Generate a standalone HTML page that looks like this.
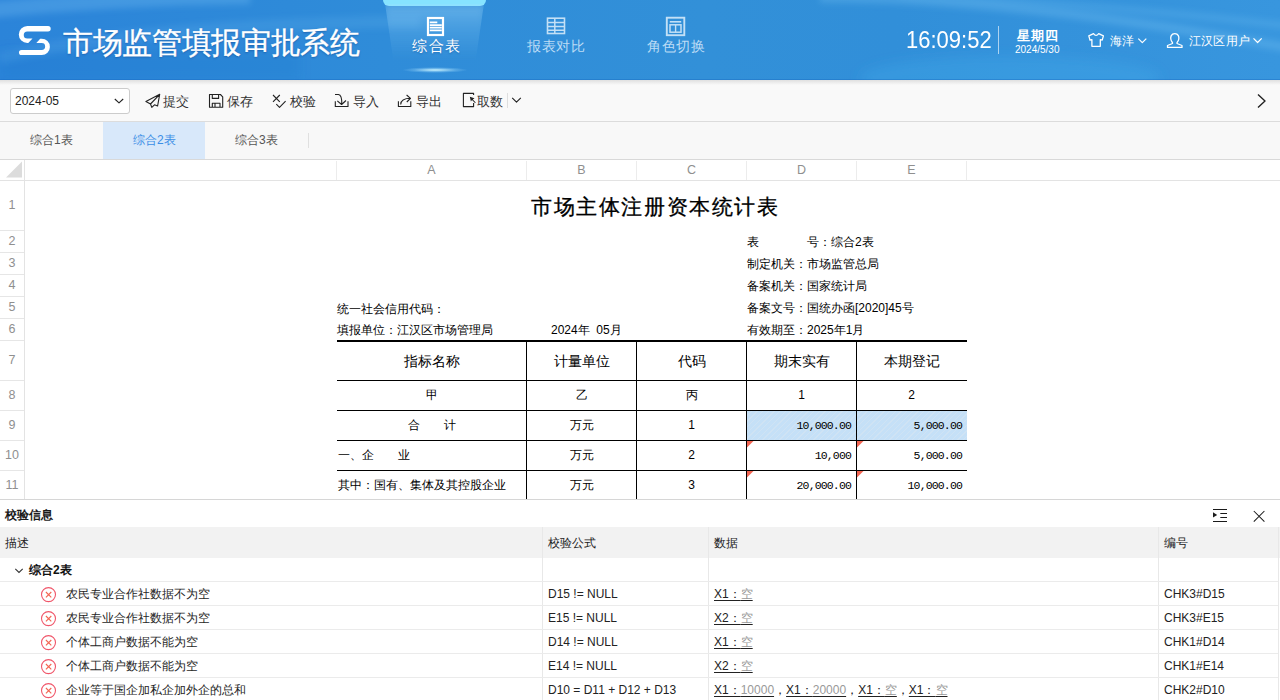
<!DOCTYPE html>
<html><head><meta charset="utf-8">
<style>
*{box-sizing:border-box;margin:0;padding:0}
html,body{width:1280px;height:700px;overflow:hidden;background:#fff;font-family:"Liberation Sans",sans-serif;color:#333}
.abs{position:absolute}
#hdr{position:absolute;left:0;top:0;width:1280px;height:80px;overflow:hidden;
 background:linear-gradient(90deg,#2b84d9 0%,#2f8cd9 30%,#3290d8 55%,#318fd9 70%,#3896de 100%)}
#bar{position:absolute;left:0;top:80px;width:1280px;height:42px;background:#f9f9f9;border-bottom:1px solid #dcdcdc}
#tabs{position:absolute;left:0;top:122px;width:1280px;height:38px;background:#f8f8f8;border-bottom:1px solid #d9d9d9}
#sheet{position:absolute;left:0;top:160px;width:1280px;height:340px;background:#fff;overflow:hidden}
#panel{position:absolute;left:0;top:499px;width:1280px;height:201px;background:#fff;border-top:1px solid #d6d6d6;overflow:hidden}
.t{position:absolute;white-space:nowrap}
.g{color:#999}
u{text-decoration:underline;text-underline-offset:2px}
</style></head><body>
<div id="hdr">
 <svg class="abs" style="left:0;top:0" width="1280" height="80" viewBox="0 0 1280 80">
  <defs><filter id="bl" x="-10%" y="-50%" width="120%" height="200%"><feGaussianBlur stdDeviation="3"/></filter>
  <filter id="bl2" x="-10%" y="-50%" width="120%" height="200%"><feGaussianBlur stdDeviation="6"/></filter></defs>
  <g filter="url(#bl)" fill="none">
   <path d="M-10 10 Q 110 -2 250 -4" stroke="rgba(150,215,255,.22)" stroke-width="16"/>
   <path d="M0 58 Q 160 22 420 22" stroke="rgba(150,215,255,.12)" stroke-width="12"/>
   <path d="M820 -2 Q 1020 -2 1290 48" stroke="rgba(150,220,255,.22)" stroke-width="9"/>
   <path d="M900 -6 Q 1120 6 1290 26" stroke="rgba(150,220,255,.16)" stroke-width="7"/>
  </g>
  <ellipse cx="1010" cy="78" rx="150" ry="22" fill="rgba(70,180,240,.25)" filter="url(#bl2)"/>
  <rect x="0" y="50" width="300" height="30" fill="rgba(20,90,190,.10)" filter="url(#bl2)"/>
 </svg>
 <svg class="abs" style="left:0;top:0" width="60" height="60" viewBox="0 0 60 60">
  <path d="M48 26.1 L27.3 26.1 A8.5 8.5 0 0 0 27.3 43.1 L28.3 43.1 L32.5 38.6 L27.3 38.6 A3.55 3.55 0 0 1 27.3 31.5 L48 31.5 A2.7 2.7 0 0 0 48 26.1 Z" fill="#fff"/>
  <path d="M40.2 38.7 L41.7 38.7 A8.2 8.2 0 0 1 41.7 55.1 L21.5 55.1 A2.55 2.55 0 0 1 21.5 50 L41.7 50 A3.45 3.45 0 0 0 41.7 43.1 L36.3 43.1 Z" fill="#fff"/>
 </svg>
 <div class="t" style="left:63px;top:25px;letter-spacing:-0.35px;font-size:30px;line-height:36px;color:#fff;-webkit-text-stroke:0.35px #fff;text-shadow:0 1px 2px rgba(0,40,110,.4)">市场监管填报审批系统</div>
 <div class="abs" style="left:383px;top:0;width:103px;height:6px;background:#86e3ff;border-radius:0 0 6px 6px"></div>
 <div class="abs" style="left:383px;top:4px;width:103px;height:56px;background:linear-gradient(180deg,rgba(170,225,255,.42),rgba(170,225,255,.18) 45%,rgba(170,225,255,0) 100%);clip-path:polygon(2% 0,98% 0,90% 100%,10% 100%);filter:blur(4px)"></div>
 <div class="abs" style="left:402px;top:67px;width:66px;height:6px;border-radius:50%;background:radial-gradient(ellipse at center,rgba(210,248,255,.95),rgba(170,225,255,.3) 45%,rgba(170,225,255,0) 70%)"></div>
 <svg class="abs" style="left:0;top:0" width="720" height="60" viewBox="0 0 720 60">
  <rect x="428" y="18" width="15" height="17" fill="none" stroke="#fff" stroke-width="2.2"/>
  <path d="M429.8 22.4H437.3M429.8 25.1H441.8M429.8 27.7H441.8M429.8 30.3H441.8" stroke="#fff" stroke-width="1.7"/>
  <g stroke="#c3e0f6" fill="none">
   <rect x="547.5" y="18.2" width="17" height="15.3" stroke-width="1.6"/>
   <path d="M547.5 22.5H564.5M547.5 26.5H564.5M547.5 30.3H564.5M554.8 18.2V33.5" stroke-width="1.5"/>
   <rect x="666.8" y="17.7" width="17.5" height="17.5" stroke-width="1.9"/>
   <path d="M669.8 21.8H681.2" stroke-width="1.6"/>
   <rect x="670" y="24.8" width="11" height="7.4" stroke-width="1.5"/>
   <path d="M675.6 24.8V32.2" stroke-width="1.4"/>
  </g>
 </svg>
 <div class="t" style="left:412px;top:37px;font-size:15px;line-height:18px;color:#fff;letter-spacing:1.6px;text-shadow:0 1px 2px rgba(0,50,120,.35)">综合表</div>
 <div class="t" style="left:527px;top:37px;font-size:14px;line-height:18px;color:#bcdcf5;letter-spacing:0.6px">报表对比</div>
 <div class="t" style="left:647px;top:37px;font-size:14px;line-height:18px;color:#bcdcf5;letter-spacing:0.6px">角色切换</div>
 <div class="t" style="left:906px;top:26.5px;font-size:22px;line-height:26px;color:#fff;transform:scaleY(1.06);transform-origin:0 0">16:09:52</div>
 <div class="abs" style="left:998px;top:26px;width:1px;height:28px;background:rgba(255,255,255,.6)"></div>
 <div class="t" style="left:1017px;top:28px;font-size:13px;line-height:16px;color:#fff;font-weight:bold;letter-spacing:1px">星期四</div>
 <div class="t" style="left:1015px;top:43.5px;font-size:10px;line-height:12px;color:#fff">2024/5/30</div>
 <svg class="abs" style="left:0;top:0" width="1280" height="60" viewBox="0 0 1280 60">
  <g fill="none" stroke="#fff" stroke-width="1.3" stroke-linejoin="round">
   <path d="M1093.5 33.6 Q1096 37.2 1098.7 33.6 L1103.4 35.8 L1102.2 40.2 L1100.3 39.6 V46.3 H1091.9 V39.6 L1090 40.2 L1088.8 35.8 Z"/>
   <path d="M1138.3 38.6L1142.3 42.6L1146.3 38.6" stroke-width="1.2"/>
   <path d="M1174.8 33.7 C1171 33.7 1170.5 37 1170.8 39 C1171.1 41 1172 42 1172.5 42.6 L1172.5 43.5 L1167.5 45.5 V47.4 H1182 V45.5 L1177 43.5 L1177 42.6 C1177.5 42 1178.5 41 1178.8 39 C1179.1 37 1178.6 33.7 1174.8 33.7 Z"/>
   <path d="M1253.5 38.4L1257.6 42.5L1261.7 38.4" stroke-width="1.2"/>
  </g>
 </svg>
 <div class="t" style="left:1110px;top:33px;font-size:12px;line-height:16px;color:#fff;letter-spacing:0.3px">海洋</div>
 <div class="t" style="left:1189px;top:33px;font-size:12px;line-height:16px;color:#fff;letter-spacing:0.2px">江汉区用户</div>
</div>
<div class="abs" style="left:0;top:79px;width:1280px;height:1px;background:rgba(20,100,190,.35)"></div>
<div id="bar">
 <div class="abs" style="left:0;top:0;width:1280px;height:5px;background:linear-gradient(180deg,rgba(0,0,0,.10),rgba(0,0,0,0))"></div>
 <div class="abs" style="left:10px;top:8px;width:120px;height:26px;background:#fff;border:1px solid #cccccc;border-radius:3px"></div>
 <div class="t" style="left:15px;top:14px;font-size:12px;line-height:14px;color:#222">2024-05</div>
 <svg class="abs" style="left:0;top:0" width="1280" height="42" viewBox="0 80 1280 42">
  <g fill="none" stroke="#222" stroke-width="1.1" stroke-linejoin="round">
   <path d="M114.8 99 L119 102.9 L123.2 99"/>
   <path d="M159.7 94.3 L145.9 101.5 L150.5 104 L151.8 107.4 L154.5 104.8 L157.6 106 Z M159.7 94.3 L150.5 104"/>
   <path d="M209.5 94.5 H220.4 L222.7 96.8 V107.3 H209.5 Z M212.3 94.5 V98.4 H218.6 V94.5 M212.3 107.3 V103.2 H220 V107.3 M215 103.2 V107.3"/>
   <path d="M273 95 L279.8 101.8 M279.8 95 L273 101.8 M276.3 104.2 L279.5 107.3 L285.6 101.2"/>
   <path d="M335.3 101.3 V106.5 H348 V101.3 M335 94.5 H338.5 Q342 95 341.8 104 M337.3 100.8 L341.6 104.5 L346 100.5"/>
   <path d="M398.4 101.3 V106.5 H410.8 V101.3 M400.7 104.5 Q401 98.3 410.5 98.3 M406.6 95 L410.5 98.3 L406.8 102"/>
   <path d="M473.6 95 V93.4 H463.4 V106.6 H473.6 V103"/>
   <path d="M512.2 97.8 L516.5 102.2 L520.8 97.8"/>
   <path d="M1258 94.5 L1265 101 L1258 107.5" stroke-width="1.4"/>
  </g>
  <path d="M469.8 96.8 L474.5 98.3 L472.8 99.4 L475.8 102.4 L475 103 L472 100 L470.9 101.6 Z" fill="#222"/>
  <rect x="507" y="93" width="1" height="15" fill="#dedede"/>
 </svg>
 <div class="t" style="left:163px;top:14px;font-size:12.5px;line-height:16px;color:#333">提交</div>
 <div class="t" style="left:227px;top:14px;font-size:12.5px;line-height:16px;color:#333">保存</div>
 <div class="t" style="left:290px;top:14px;font-size:12.5px;line-height:16px;color:#333">校验</div>
 <div class="t" style="left:353px;top:14px;font-size:12.5px;line-height:16px;color:#333">导入</div>
 <div class="t" style="left:416px;top:14px;font-size:12.5px;line-height:16px;color:#333">导出</div>
 <div class="t" style="left:477px;top:14px;font-size:12.5px;line-height:16px;color:#333">取数</div>
</div>
<div id="tabs">
 <div class="abs" style="left:103px;top:0;width:102px;height:37px;background:#d8e8fa"></div>
 <div class="t" style="left:30px;top:11px;font-size:12px;line-height:14px;color:#555">综合1表</div>
 <div class="t" style="left:133px;top:11px;font-size:12px;line-height:14px;color:#3b8ee6">综合2表</div>
 <div class="t" style="left:235px;top:11px;font-size:12px;line-height:14px;color:#555">综合3表</div>
 <div class="abs" style="left:308px;top:11px;width:1px;height:15px;background:#e0e0e0"></div>
</div>
<div id="sheet">
<div class="abs" style="left:0;top:20px;width:1280px;height:1px;background:#e3e3e3"></div>
<div class="abs" style="left:24px;top:0;width:1px;height:340px;background:#e3e3e3"></div>
<svg class="abs" style="left:0;top:0" width="26" height="20"><path d="M22 1.5 V17.5 H6 Z" fill="#dcdcdc"/></svg>
<div class="abs" style="left:336px;top:1px;width:1px;height:19px;background:#ececec"></div>
<div class="abs" style="left:526px;top:1px;width:1px;height:19px;background:#ececec"></div>
<div class="abs" style="left:636px;top:1px;width:1px;height:19px;background:#ececec"></div>
<div class="abs" style="left:746px;top:1px;width:1px;height:19px;background:#ececec"></div>
<div class="abs" style="left:856px;top:1px;width:1px;height:19px;background:#ececec"></div>
<div class="abs" style="left:966px;top:1px;width:1px;height:19px;background:#ececec"></div>
<div class="t" style="left:337px;top:3px;width:189px;text-align:center;font-size:12.5px;line-height:14px;color:#8f8f8f">A</div>
<div class="t" style="left:527px;top:3px;width:109px;text-align:center;font-size:12.5px;line-height:14px;color:#8f8f8f">B</div>
<div class="t" style="left:637px;top:3px;width:109px;text-align:center;font-size:12.5px;line-height:14px;color:#8f8f8f">C</div>
<div class="t" style="left:747px;top:3px;width:109px;text-align:center;font-size:12.5px;line-height:14px;color:#8f8f8f">D</div>
<div class="t" style="left:857px;top:3px;width:109px;text-align:center;font-size:12.5px;line-height:14px;color:#8f8f8f">E</div>
<div class="abs" style="left:0;top:70px;width:24px;height:1px;background:#e6e6e6"></div>
<div class="t" style="left:0;top:38.0px;width:24px;text-align:center;font-size:12.5px;line-height:14px;color:#8f8f8f">1</div>
<div class="abs" style="left:0;top:92px;width:24px;height:1px;background:#e6e6e6"></div>
<div class="t" style="left:0;top:74.0px;width:24px;text-align:center;font-size:12.5px;line-height:14px;color:#8f8f8f">2</div>
<div class="abs" style="left:0;top:114px;width:24px;height:1px;background:#e6e6e6"></div>
<div class="t" style="left:0;top:96.0px;width:24px;text-align:center;font-size:12.5px;line-height:14px;color:#8f8f8f">3</div>
<div class="abs" style="left:0;top:136px;width:24px;height:1px;background:#e6e6e6"></div>
<div class="t" style="left:0;top:118.0px;width:24px;text-align:center;font-size:12.5px;line-height:14px;color:#8f8f8f">4</div>
<div class="abs" style="left:0;top:158px;width:24px;height:1px;background:#e6e6e6"></div>
<div class="t" style="left:0;top:140.0px;width:24px;text-align:center;font-size:12.5px;line-height:14px;color:#8f8f8f">5</div>
<div class="abs" style="left:0;top:180px;width:24px;height:1px;background:#e6e6e6"></div>
<div class="t" style="left:0;top:162.0px;width:24px;text-align:center;font-size:12.5px;line-height:14px;color:#8f8f8f">6</div>
<div class="abs" style="left:0;top:220px;width:24px;height:1px;background:#e6e6e6"></div>
<div class="t" style="left:0;top:193.0px;width:24px;text-align:center;font-size:12.5px;line-height:14px;color:#8f8f8f">7</div>
<div class="abs" style="left:0;top:250px;width:24px;height:1px;background:#e6e6e6"></div>
<div class="t" style="left:0;top:228.0px;width:24px;text-align:center;font-size:12.5px;line-height:14px;color:#8f8f8f">8</div>
<div class="abs" style="left:0;top:280px;width:24px;height:1px;background:#e6e6e6"></div>
<div class="t" style="left:0;top:258.0px;width:24px;text-align:center;font-size:12.5px;line-height:14px;color:#8f8f8f">9</div>
<div class="abs" style="left:0;top:310px;width:24px;height:1px;background:#e6e6e6"></div>
<div class="t" style="left:0;top:288.0px;width:24px;text-align:center;font-size:12.5px;line-height:14px;color:#8f8f8f">10</div>
<div class="abs" style="left:0;top:340px;width:24px;height:1px;background:#e6e6e6"></div>
<div class="t" style="left:0;top:318.0px;width:24px;text-align:center;font-size:12.5px;line-height:14px;color:#8f8f8f">11</div>
<div class="t" style="left:531px;top:34px;letter-spacing:1.6px;font-family:'Liberation Serif',serif;font-size:21px;line-height:26px;-webkit-text-stroke:0.3px #000;color:#000">市场主体注册资本统计表</div>
<div class="t" style="left:747px;top:75px;font-size:12px;line-height:14px;color:#000">表</div>
<div class="t" style="left:807px;top:75px;font-size:12px;line-height:14px;color:#000">号：综合2表</div>
<div class="t" style="left:747px;top:97px;font-size:12px;line-height:14px;color:#000">制定机关：市场监管总局</div>
<div class="t" style="left:747px;top:119px;font-size:12px;line-height:14px;color:#000">备案机关：国家统计局</div>
<div class="t" style="left:747px;top:141px;font-size:12px;line-height:14px;color:#000">备案文号：国统办函[2020]45号</div>
<div class="t" style="left:337px;top:142px;font-size:12px;line-height:14px;color:#000">统一社会信用代码：</div>
<div class="t" style="left:337px;top:163px;font-size:12px;line-height:14px;color:#000">填报单位：江汉区市场管理局</div>
<div class="t" style="left:551px;top:163px;font-size:12px;line-height:14px;color:#000">2024年&nbsp; 05月</div>
<div class="t" style="left:747px;top:163px;font-size:12px;line-height:14px;color:#000">有效期至：2025年1月</div>
<div class="abs" style="left:337px;top:180px;width:630px;height:2px;background:#000"></div>
<div class="abs" style="left:337px;top:220px;width:630px;height:1px;background:#000"></div>
<div class="abs" style="left:337px;top:250px;width:630px;height:1px;background:#000"></div>
<div class="abs" style="left:337px;top:280px;width:630px;height:1px;background:#000"></div>
<div class="abs" style="left:337px;top:310px;width:630px;height:1px;background:#000"></div>
<div class="abs" style="left:526px;top:182px;width:1px;height:160px;background:#000"></div>
<div class="abs" style="left:636px;top:182px;width:1px;height:160px;background:#000"></div>
<div class="abs" style="left:746px;top:182px;width:1px;height:160px;background:#000"></div>
<div class="abs" style="left:856px;top:182px;width:1px;height:160px;background:#000"></div>
<div class="abs" style="left:747px;top:251px;width:109px;height:29px;background:repeating-linear-gradient(135deg,#c5e0f7 0,#c5e0f7 3px,#cfe3f4 3px,#cfe3f4 4px)"></div>
<div class="abs" style="left:857px;top:251px;width:110px;height:29px;background:repeating-linear-gradient(135deg,#c5e0f7 0,#c5e0f7 3px,#cfe3f4 3px,#cfe3f4 4px)"></div>
<svg class="abs" style="left:747px;top:281px" width="7" height="7"><path d="M0 0H6.5L0 6.5Z" fill="#f26552"/></svg>
<svg class="abs" style="left:747px;top:311px" width="7" height="7"><path d="M0 0H6.5L0 6.5Z" fill="#f26552"/></svg>
<svg class="abs" style="left:857px;top:281px" width="7" height="7"><path d="M0 0H6.5L0 6.5Z" fill="#f26552"/></svg>
<svg class="abs" style="left:857px;top:311px" width="7" height="7"><path d="M0 0H6.5L0 6.5Z" fill="#f26552"/></svg>
<div class="t" style="left:337px;top:193px;width:189px;text-align:center;font-size:14px;line-height:16px;color:#000">指标名称</div>
<div class="t" style="left:527px;top:193px;width:109px;text-align:center;font-size:14px;line-height:16px;color:#000">计量单位</div>
<div class="t" style="left:637px;top:193px;width:109px;text-align:center;font-size:14px;line-height:16px;color:#000">代码</div>
<div class="t" style="left:747px;top:193px;width:109px;text-align:center;font-size:14px;line-height:16px;color:#000">期末实有</div>
<div class="t" style="left:857px;top:193px;width:109px;text-align:center;font-size:14px;line-height:16px;color:#000">本期登记</div>
<div class="t" style="left:337px;top:228px;width:189px;text-align:center;font-size:12px;line-height:14px;color:#000">甲</div>
<div class="t" style="left:527px;top:228px;width:109px;text-align:center;font-size:12px;line-height:14px;color:#000">乙</div>
<div class="t" style="left:637px;top:228px;width:109px;text-align:center;font-size:12px;line-height:14px;color:#000">丙</div>
<div class="t" style="left:747px;top:228px;width:109px;text-align:center;font-size:12px;line-height:14px;color:#000">1</div>
<div class="t" style="left:857px;top:228px;width:109px;text-align:center;font-size:12px;line-height:14px;color:#000">2</div>
<div class="t" style="left:408px;top:258px;font-size:12px;line-height:14px;color:#000">合　　计</div>
<div class="t" style="left:338px;top:288px;font-size:12px;line-height:14px;color:#000">一、企　　业</div>
<div class="t" style="left:338px;top:318px;font-size:12px;line-height:14px;color:#000">其中：国有、集体及其控股企业</div>
<div class="t" style="left:527px;top:258px;width:109px;text-align:center;font-size:12px;line-height:14px;color:#000">万元</div>
<div class="t" style="left:637px;top:258px;width:109px;text-align:center;font-size:12px;line-height:14px;color:#000">1</div>
<div class="t" style="left:527px;top:288px;width:109px;text-align:center;font-size:12px;line-height:14px;color:#000">万元</div>
<div class="t" style="left:637px;top:288px;width:109px;text-align:center;font-size:12px;line-height:14px;color:#000">2</div>
<div class="t" style="left:527px;top:318px;width:109px;text-align:center;font-size:12px;line-height:14px;color:#000">万元</div>
<div class="t" style="left:637px;top:318px;width:109px;text-align:center;font-size:12px;line-height:14px;color:#000">3</div>
<div class="t" style="left:747px;top:258px;width:104px;font-family:'Liberation Mono',monospace;font-size:11.5px;line-height:14px;color:#000;letter-spacing:-0.85px;text-align:right;padding-top:0.5px">10,000.00</div>
<div class="t" style="left:857px;top:258px;width:105px;font-family:'Liberation Mono',monospace;font-size:11.5px;line-height:14px;color:#000;letter-spacing:-0.85px;text-align:right;padding-top:0.5px">5,000.00</div>
<div class="t" style="left:747px;top:288px;width:104px;font-family:'Liberation Mono',monospace;font-size:11.5px;line-height:14px;color:#000;letter-spacing:-0.85px;text-align:right;padding-top:0.5px">10,000</div>
<div class="t" style="left:857px;top:288px;width:105px;font-family:'Liberation Mono',monospace;font-size:11.5px;line-height:14px;color:#000;letter-spacing:-0.85px;text-align:right;padding-top:0.5px">5,000.00</div>
<div class="t" style="left:747px;top:318px;width:104px;font-family:'Liberation Mono',monospace;font-size:11.5px;line-height:14px;color:#000;letter-spacing:-0.85px;text-align:right;padding-top:0.5px">20,000.00</div>
<div class="t" style="left:857px;top:318px;width:105px;font-family:'Liberation Mono',monospace;font-size:11.5px;line-height:14px;color:#000;letter-spacing:-0.85px;text-align:right;padding-top:0.5px">10,000.00</div>
</div>
<div id="panel">
<div class="t" style="left:5px;top:7.5px;font-size:12px;line-height:14px;color:#1a1a1a;font-weight:bold">校验信息</div>
<div class="abs" style="left:0;top:27px;width:1280px;height:31px;background:#f2f2f2"></div>
<div class="abs" style="left:542px;top:27px;width:1px;height:174px;background:#e8e8e8"></div>
<div class="abs" style="left:708px;top:27px;width:1px;height:174px;background:#e8e8e8"></div>
<div class="abs" style="left:1158px;top:27px;width:1px;height:174px;background:#e8e8e8"></div>
<div class="abs" style="left:1278px;top:27px;width:1px;height:174px;background:#e8e8e8"></div>
<div class="t" style="left:5px;top:35.5px;font-size:12px;line-height:14px;color:#222">描述</div>
<div class="t" style="left:548px;top:35.5px;font-size:12px;line-height:14px;color:#222">校验公式</div>
<div class="t" style="left:714px;top:35.5px;font-size:12px;line-height:14px;color:#222">数据</div>
<div class="t" style="left:1164px;top:35.5px;font-size:12px;line-height:14px;color:#222">编号</div>
<div class="abs" style="left:0;top:81px;width:1278px;height:1px;background:#ebebeb"></div>
<div class="abs" style="left:0;top:105px;width:1278px;height:1px;background:#ebebeb"></div>
<div class="abs" style="left:0;top:129px;width:1278px;height:1px;background:#ebebeb"></div>
<div class="abs" style="left:0;top:153px;width:1278px;height:1px;background:#ebebeb"></div>
<div class="abs" style="left:0;top:177px;width:1278px;height:1px;background:#ebebeb"></div>
<svg class="abs" style="left:0;top:0" width="1280" height="201" viewBox="0 499 1280 201"><path d="M15.3 567.8 L19 571.4 L22.7 567.8" fill="none" stroke="#333" stroke-width="1.1"/><path d="M1213 508.5 H1227 M1220.3 512.5 H1227 M1220.3 516.5 H1227 M1213 520.5 H1227" stroke="#1a1a1a" stroke-width="1"/><path d="M1213 511.2 L1217.2 513.9 L1213 516.6 Z" fill="#1a1a1a"/><path d="M1253.8 510 L1264.4 520.6 M1264.4 510 L1253.8 520.6" stroke="#1a1a1a" stroke-width="1.05"/><circle cx="48.5" cy="593.6" r="7" fill="none" stroke="#f0566a" stroke-width="1.1"/><path d="M45.9 591.0 L51.3 596.4 M51.3 591.0 L45.9 596.4" stroke="#f36452" stroke-width="1.1"/><circle cx="48.5" cy="617.6" r="7" fill="none" stroke="#f0566a" stroke-width="1.1"/><path d="M45.9 615.0 L51.3 620.4 M51.3 615.0 L45.9 620.4" stroke="#f36452" stroke-width="1.1"/><circle cx="48.5" cy="641.6" r="7" fill="none" stroke="#f0566a" stroke-width="1.1"/><path d="M45.9 639.0 L51.3 644.4 M51.3 639.0 L45.9 644.4" stroke="#f36452" stroke-width="1.1"/><circle cx="48.5" cy="665.6" r="7" fill="none" stroke="#f0566a" stroke-width="1.1"/><path d="M45.9 663.0 L51.3 668.4 M51.3 663.0 L45.9 668.4" stroke="#f36452" stroke-width="1.1"/><circle cx="48.5" cy="689.6" r="7" fill="none" stroke="#f0566a" stroke-width="1.1"/><path d="M45.9 687.0 L51.3 692.4 M51.3 687.0 L45.9 692.4" stroke="#f36452" stroke-width="1.1"/></svg>
<div class="t" style="left:29px;top:63px;font-size:12px;line-height:14px;color:#111;font-weight:bold">综合2表</div>
<div class="t" style="left:66px;top:87px;font-size:12px;line-height:14px;color:#262626">农民专业合作社数据不为空</div>
<div class="t" style="left:548px;top:87px;font-size:12px;line-height:14px;color:#262626;color:#222">D15 != NULL</div>
<div class="t" style="left:714px;top:87px;font-size:12px;line-height:14px;color:#262626;color:#222"><u>X1：<span class="g">空</span></u></div>
<div class="t" style="left:1164px;top:87px;font-size:12px;line-height:14px;color:#262626;color:#222">CHK3#D15</div>
<div class="t" style="left:66px;top:111px;font-size:12px;line-height:14px;color:#262626">农民专业合作社数据不为空</div>
<div class="t" style="left:548px;top:111px;font-size:12px;line-height:14px;color:#262626;color:#222">E15 != NULL</div>
<div class="t" style="left:714px;top:111px;font-size:12px;line-height:14px;color:#262626;color:#222"><u>X2：<span class="g">空</span></u></div>
<div class="t" style="left:1164px;top:111px;font-size:12px;line-height:14px;color:#262626;color:#222">CHK3#E15</div>
<div class="t" style="left:66px;top:135px;font-size:12px;line-height:14px;color:#262626">个体工商户数据不能为空</div>
<div class="t" style="left:548px;top:135px;font-size:12px;line-height:14px;color:#262626;color:#222">D14 != NULL</div>
<div class="t" style="left:714px;top:135px;font-size:12px;line-height:14px;color:#262626;color:#222"><u>X1：<span class="g">空</span></u></div>
<div class="t" style="left:1164px;top:135px;font-size:12px;line-height:14px;color:#262626;color:#222">CHK1#D14</div>
<div class="t" style="left:66px;top:159px;font-size:12px;line-height:14px;color:#262626">个体工商户数据不能为空</div>
<div class="t" style="left:548px;top:159px;font-size:12px;line-height:14px;color:#262626;color:#222">E14 != NULL</div>
<div class="t" style="left:714px;top:159px;font-size:12px;line-height:14px;color:#262626;color:#222"><u>X2：<span class="g">空</span></u></div>
<div class="t" style="left:1164px;top:159px;font-size:12px;line-height:14px;color:#262626;color:#222">CHK1#E14</div>
<div class="t" style="left:66px;top:183px;font-size:12px;line-height:14px;color:#262626">企业等于国企加私企加外企的总和</div>
<div class="t" style="left:548px;top:183px;font-size:12px;line-height:14px;color:#262626;color:#222">D10 = D11 + D12 + D13</div>
<div class="t" style="left:714px;top:183px;font-size:12px;line-height:14px;color:#262626;color:#222"><u>X1：<span class="g">10000</span></u>，<u>X1：<span class="g">20000</span></u>，<u>X1：<span class="g">空</span></u>，<u>X1：<span class="g">空</span></u></div>
<div class="t" style="left:1164px;top:183px;font-size:12px;line-height:14px;color:#262626;color:#222">CHK2#D10</div>
</div>
</body></html>
